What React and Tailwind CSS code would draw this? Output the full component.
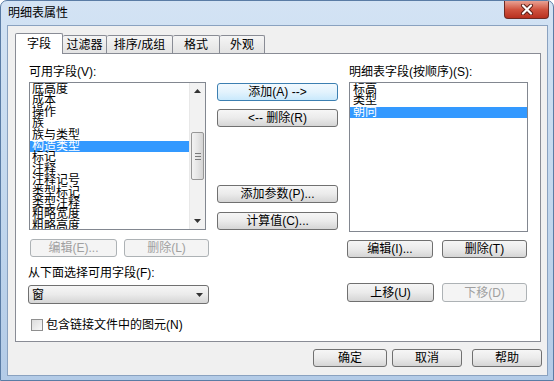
import React from "react";

const btn =
  "flex items-center justify-center rounded-[3px] border border-[#707070] bg-linear-to-b from-[#f6f6f6] via-[#ebebeb] to-[#d5d5d5] text-[12px] leading-none text-black";
const btnDis =
  "flex items-center justify-center rounded-[3px] border border-[#adb2b5] bg-[#f4f4f4] text-[12px] leading-none text-[#a0a0a0]";

const leftItems = [
  "底高度",
  "成本",
  "操作",
  "族",
  "族与类型",
  "构造类型",
  "标记",
  "注释",
  "注释记号",
  "类型标记",
  "类型注释",
  "粗略宽度",
  "粗略高度",
];
const rightItems = ["标高", "类型", "朝向"];

function Arrow({ up }) {
  return (
    <svg width="7" height="4" viewBox="0 0 7 4">
      {up ? <path d="M0 4 L3.5 0 L7 4 Z" fill="#333" /> : <path d="M0 0 L3.5 4 L7 0 Z" fill="#333" />}
    </svg>
  );
}

export default function App() {
  return (
    <div className="w-[554px] h-[381px] bg-white font-['Liberation_Sans','Noto_Sans_CJK_SC',sans-serif] text-black">
      <div className="w-full h-full flex flex-col rounded-t-[7px] border border-[#5a7ca5] bg-linear-to-b from-[#d3e3f4] via-[#c3d8ee] to-[#b3cbe7] overflow-hidden">
        {/* title bar */}
        <div className="h-[24px] flex items-start justify-between">
          <div className="pl-[7px] h-[24px] leading-[24px] text-[12px] text-black">明细表属性</div>
          <div className="mr-[4px] w-[45px] h-[18px] rounded-b-[4px] border border-t-0 border-[#6e2a22] bg-linear-to-b from-[#e8a193] via-[#d0533f] to-[#b8301f] flex items-center justify-center">
            <svg width="14" height="11" viewBox="0 0 14 11">
              <path d="M3 1.5 L11 9.5 M11 1.5 L3 9.5" stroke="#5a1c14" strokeWidth="4" strokeLinecap="round" />
              <path d="M3 1.5 L11 9.5 M11 1.5 L3 9.5" stroke="#ffffff" strokeWidth="2.2" strokeLinecap="round" />
            </svg>
          </div>
        </div>

        {/* client area */}
        <div className="ml-[6px] w-[541px] h-[351px] border border-[#8aa2c0] bg-[#f0f0f0] flex flex-col">
          {/* tabs */}
          <div className="ml-[7px] mt-[7px] h-[20px] flex items-end relative z-10">
            <div className="w-[48px] h-[21px] -mb-[1px] bg-white border-x border-t border-[#898c95] rounded-t-[2px] flex items-center justify-center text-[12px]">
              字段
            </div>
            <div className="w-[44px] h-[18px] border-t border-r border-[#898c95] rounded-t-[2px] bg-linear-to-b from-[#f5f5f5] to-[#e3e3e3] flex items-center justify-center text-[12px]">
              过滤器
            </div>
            <div className="w-[66px] h-[18px] border-t border-r border-[#898c95] rounded-t-[2px] bg-linear-to-b from-[#f5f5f5] to-[#e3e3e3] flex items-center justify-center text-[12px]">
              排序/成组
            </div>
            <div className="w-[47px] h-[18px] border-t border-r border-[#898c95] rounded-t-[2px] bg-linear-to-b from-[#f5f5f5] to-[#e3e3e3] flex items-center justify-center text-[12px]">
              格式
            </div>
            <div className="w-[45px] h-[18px] border-t border-r border-[#898c95] rounded-t-[2px] bg-linear-to-b from-[#f5f5f5] to-[#e3e3e3] flex items-center justify-center text-[12px]">
              外观
            </div>
          </div>

          {/* panel */}
          <div className="ml-[7px] w-[526px] h-[289px] border border-[#898c95] bg-white pl-[12px] pt-[10px] flex">
            {/* left column */}
            <div className="w-[181px] flex flex-col">
              <div className="h-[16px] leading-[16px] text-[12px] pl-[1px]">可用字段(V):</div>
              <div className="mt-[2px] ml-[1px] w-[177px] h-[148px] border border-[#828790] bg-white flex">
                <div className="flex-1 overflow-hidden pt-[1px]">
                  {leftItems.map((t, i) => (
                    <div
                      key={t}
                      className={
                        i === 5
                          ? "h-[11.4px] leading-[11.4px] text-[12px] pl-[2px] whitespace-nowrap bg-[#3399ff] text-white"
                          : "h-[11.4px] leading-[11.4px] text-[12px] pl-[2px] whitespace-nowrap"
                      }
                    >
                      {t}
                    </div>
                  ))}
                </div>
                <div className="w-[16px] flex flex-col bg-[#f2f2f2] border-l border-[#e8e8e8]">
                  <div className="h-[16px] flex items-center justify-center">
                    <Arrow up />
                  </div>
                  <div className="flex-1 flex flex-col">
                    <div className="mt-[33px] mx-[1px] h-[48px] rounded-[2px] border border-[#979797] bg-linear-to-r from-[#f3f3f3] via-[#e6e6e6] to-[#d4d4d4] flex flex-col items-center justify-center gap-[2px]">
                      <div className="w-[6px] h-[1px] bg-[#7a7a7a]" />
                      <div className="w-[6px] h-[1px] bg-[#7a7a7a]" />
                      <div className="w-[6px] h-[1px] bg-[#7a7a7a]" />
                    </div>
                  </div>
                  <div className="h-[16px] flex items-center justify-center">
                    <Arrow />
                  </div>
                </div>
              </div>
              <div className="mt-[9px] ml-[2px] flex gap-[7px]">
                <div className={btnDis + " w-[87px] h-[18px]"}>编辑(E)...</div>
                <div className={btnDis + " w-[85px] h-[18px]"}>删除(L)</div>
              </div>
              <div className="mt-[8px] h-[16px] leading-[16px] text-[12px]">从下面选择可用字段(F):</div>
              <div className={"mt-[4px] w-[181px] h-[19px] rounded-[3px] border border-[#707070] bg-linear-to-b from-[#f6f6f6] via-[#ebebeb] to-[#d5d5d5] flex items-center justify-between pl-[3px] pr-[5px] text-[12px]"}>
                <span>窗</span>
                <Arrow />
              </div>
              <div className="mt-[15px] ml-[3px] h-[12px] flex items-center gap-[3px]">
                <div className="w-[12px] h-[12px] border border-[#8f8f8f] bg-linear-to-br from-[#dcdcdc] to-[#f8f8f8]" />
                <span className="text-[12px] leading-none">包含链接文件中的图元(N)</span>
              </div>
            </div>

            {/* middle column */}
            <div className="ml-[8px] w-[121px] flex flex-col">
              <div className="mt-[19px] h-[18px] rounded-[3px] border border-[#3c7fb1] bg-linear-to-b from-[#f2f9fe] via-[#e3f3fd] to-[#c9e9fc] flex items-center justify-center text-[12px] leading-none">
                添加(A) --&gt;
              </div>
              <div className={btn + " mt-[8px] h-[18px]"}>&lt;-- 删除(R)</div>
              <div className={btn + " mt-[58px] h-[18px]"}>添加参数(P)...</div>
              <div className={btn + " mt-[9px] h-[18px]"}>计算值(C)...</div>
            </div>

            {/* right column */}
            <div className="ml-[9px] w-[181px] flex flex-col">
              <div className="h-[16px] leading-[16px] text-[12px] pl-[2px]">明细表字段(按顺序)(S):</div>
              <div className="mt-[2px] ml-[2px] w-[179px] h-[150px] border border-[#828790] bg-white pt-[1px] overflow-hidden">
                {rightItems.map((t, i) => (
                  <div
                    key={t}
                    className={
                      i === 2
                        ? "h-[11.4px] leading-[11.4px] text-[12px] pl-[3px] bg-[#3399ff] text-white"
                        : "h-[11.4px] leading-[11.4px] text-[12px] pl-[3px]"
                    }
                  >
                    {t}
                  </div>
                ))}
              </div>
              <div className="mt-[8px] flex gap-[9px]">
                <div className={btn + " w-[86px] h-[18px]"}>编辑(I)...</div>
                <div className={btn + " w-[85px] h-[18px]"}>删除(T)</div>
              </div>
              <div className="mt-[25px] flex gap-[8px]">
                <div className={btn + " w-[87px] h-[19px]"}>上移(U)</div>
                <div className={btnDis + " w-[85px] h-[19px]"}>下移(D)</div>
              </div>
            </div>
          </div>

          {/* bottom buttons */}
          <div className="mt-[7px] pr-[5px] flex justify-end">
            <div className={btn + " w-[74px] h-[18px]"}>确定</div>
            <div className={btn + " ml-[5px] w-[70px] h-[18px]"}>取消</div>
            <div className={btn + " ml-[10px] w-[70px] h-[18px]"}>帮助</div>
          </div>
        </div>
      </div>
    </div>
  );
}
